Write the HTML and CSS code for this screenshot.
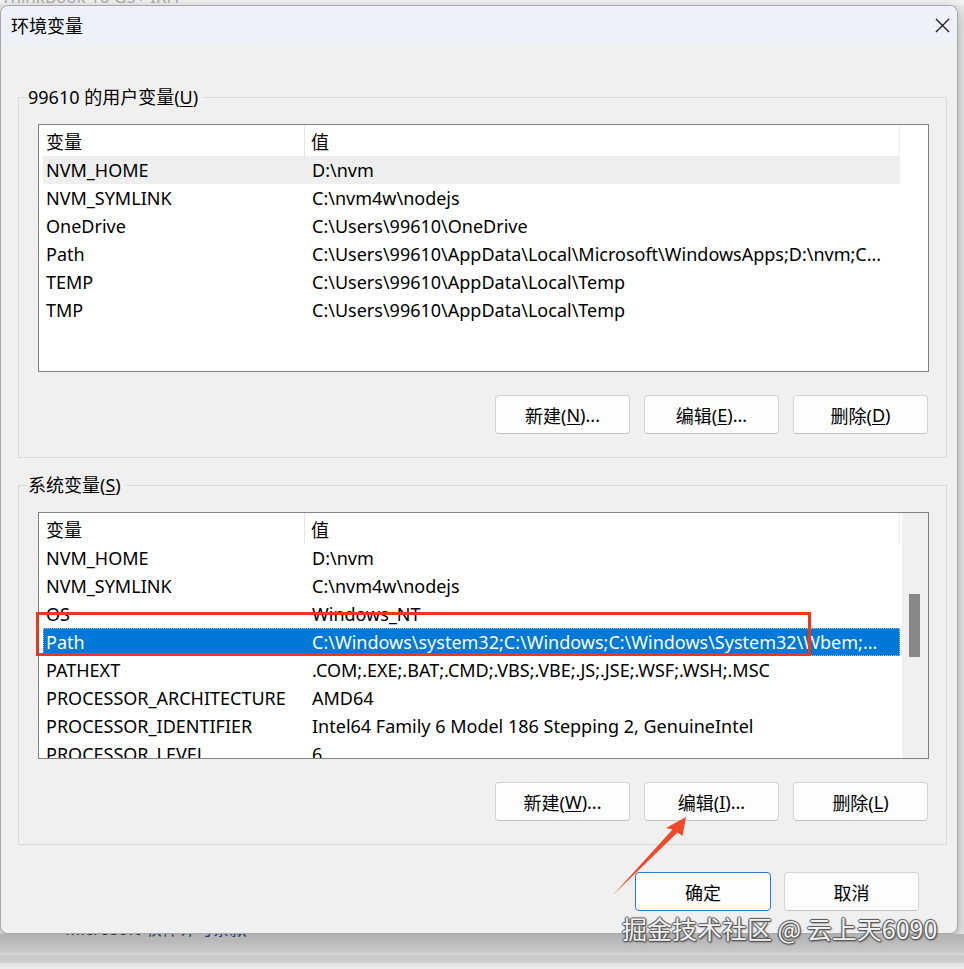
FILE: index.html
```html
<!DOCTYPE html>
<html lang="zh-CN">

<head>
    <meta charset="UTF-8">
    <title>环境变量</title>
    <link rel="stylesheet" href="styles.css">
</head>

<body>

    <div class="desk-top"><span>ThinkBook 16 G5+ IRH</span></div>

    <div class="dialog">
        <div class="titlebar">
            <span class="title">环境变量</span>
            <svg class="close" width="15" height="15" viewBox="0 0 15 15">
                <path d="M1 1 L14 14 M14 1 L1 14" stroke="#1a1a1a" stroke-width="1.3" fill="none" />
            </svg>
        </div>

        <fieldset class="group">
            <legend>99610 的用户变量(<u>U</u>)</legend>
            <div class="list">
                <div class="list-main">
                    <div class="head">
                        <div class="c1">变量</div>
                        <div class="c2">值</div>
                    </div>
                    <div class="row hot"><div class="c1">NVM_HOME</div><div class="c2">D:\nvm</div></div>
                    <div class="row"><div class="c1">NVM_SYMLINK</div><div class="c2">C:\nvm4w\nodejs</div></div>
                    <div class="row"><div class="c1">OneDrive</div><div class="c2">C:\Users\99610\OneDrive</div></div>
                    <div class="row"><div class="c1">Path</div><div class="c2">C:\Users\99610\AppData\Local\Microsoft\WindowsApps;D:\nvm;C...</div></div>
                    <div class="row"><div class="c1">TEMP</div><div class="c2">C:\Users\99610\AppData\Local\Temp</div></div>
                    <div class="row"><div class="c1">TMP</div><div class="c2">C:\Users\99610\AppData\Local\Temp</div></div>
                </div>
            </div>
            <div class="btns">
                <div class="btn">新建(<u>N</u>)...</div>
                <div class="btn">编辑(<u>E</u>)...</div>
                <div class="btn">删除(<u>D</u>)</div>
            </div>
        </fieldset>

        <fieldset class="group sys">
            <legend>系统变量(<u>S</u>)</legend>
            <div class="list short">
                <div class="list-main">
                    <div class="head">
                        <div class="c1">变量</div>
                        <div class="c2">值</div>
                    </div>
                    <div class="row"><div class="c1">NVM_HOME</div><div class="c2">D:\nvm</div></div>
                    <div class="row"><div class="c1">NVM_SYMLINK</div><div class="c2">C:\nvm4w\nodejs</div></div>
                    <div class="row"><div class="c1">OS</div><div class="c2">Windows_NT</div></div>
                    <div class="row sel"><div class="c1">Path</div><div class="c2">C:\Windows\system32;C:\Windows;C:\Windows\System32\Wbem;...</div></div>
                    <div class="row"><div class="c1">PATHEXT</div><div class="c2">.COM;.EXE;.BAT;.CMD;.VBS;.VBE;.JS;.JSE;.WSF;.WSH;.MSC</div></div>
                    <div class="row"><div class="c1">PROCESSOR_ARCHITECTURE</div><div class="c2">AMD64</div></div>
                    <div class="row"><div class="c1">PROCESSOR_IDENTIFIER</div><div class="c2">Intel64 Family 6 Model 186 Stepping 2, GenuineIntel</div></div>
                    <div class="row"><div class="c1">PROCESSOR_LEVEL</div><div class="c2">6</div></div>
                </div>
                <div class="scrollbar"><div class="thumb"></div></div>
            </div>
            <div class="btns">
                <div class="btn">新建(<u>W</u>)...</div>
                <div class="btn">编辑(<u>I</u>)...</div>
                <div class="btn">删除(<u>L</u>)</div>
            </div>
        </fieldset>

        <div class="dialog-btns">
            <div class="btn default">确定</div>
            <div class="btn">取消</div>
        </div>
    </div>

    <div class="desk-bottom"><span><b>Microsoft</b> 软件许可条款</span></div>

    <!-- annotations drawn over the screenshot -->
    <svg class="annot" width="964" height="969" viewBox="0 0 964 969">
        <rect x="37.5" y="613.5" width="772" height="41" fill="none" stroke="#e8391b" stroke-width="3" />
        <polygon points="686,817 682.5,836 677.5,832.5 613.5,894.5 672.5,829.5 666,828" fill="#f04a2a" />
    </svg>

    <div class="watermark">掘金技术社区 @ 云上天6090</div>

</body>

</html>
```

FILE: styles.css
```css
* {
    box-sizing: border-box;
}

body {
    margin: 0;
    width: 964px;
    height: 969px;
    overflow: hidden;
    position: relative;
    background: #e9e9e9;
    font-family: "Noto Sans", "Noto Sans CJK SC", sans-serif;
    font-size: 18px;
    color: #000;
}

u {
    text-underline-offset: 2px;
    text-decoration-thickness: 1px;
}

.desk-top {
    height: 5px;
    overflow: hidden;
    background: #f3f3f3;
    padding-left: 1px;
}

.desk-top span {
    display: block;
    margin-top: -13px;
    line-height: 20px;
    font-size: 17px;
    color: #a8a8a8;
}

.dialog {
    width: 958px;
    height: 929px;
    display: flex;
    flex-direction: column;
    background: #f0f0f0;
    border: 1px solid #a8a8a8;
    border-radius: 8px;
    box-shadow: 0 4px 14px rgba(0, 0, 0, 0.3);
}

.titlebar {
    height: 42px;
    flex-shrink: 0;
    display: flex;
    align-items: center;
    justify-content: space-between;
    padding: 0 7px 4px 10px;
    border-radius: 8px 8px 0 0;
    background: linear-gradient(#eef2f8 0, #eef2f8 34px, #f0f0f0 42px);
}

.title {
    font-size: 18px;
}

.group {
    width: 929px;
    margin: 37px 0 0 17px;
    padding: 15px 17px 23px 19px;
    border: 1px solid #dcdcdc;
    min-width: 0;
}

.group.sys {
    margin-top: 15px;
}

.group legend {
    margin-left: -10px;
    padding: 0 5px 0 0;
    line-height: 24px;
}

.list {
    height: 248px;
    display: flex;
    background: #fff;
    border: 1px solid #828282;
    overflow: hidden;
}

.list.short {
    height: 247px;
}

.list-main {
    width: 861px;
    flex-shrink: 0;
    overflow: hidden;
}

.head {
    height: 31px;
    display: flex;
    align-items: center;
    border-right: 1px solid #ececec;
}

.head .c1 {
    width: 266px;
    padding-left: 7px;
    align-self: stretch;
    display: flex;
    align-items: center;
    border-right: 1px solid #e5e5e5;
}

.head .c2 {
    padding-left: 6px;
}

.row {
    height: 28px;
    margin-left: 4px;
    display: flex;
    align-items: center;
    white-space: nowrap;
}

.row .c1 {
    width: 262px;
    flex-shrink: 0;
    padding-left: 3px;
}

.row .c2 {
    flex: 1;
    padding-left: 7px;
    overflow: hidden;
}

.row.hot {
    background: #efefef;
}

.row.sel {
    background: #0078d7;
    color: #fff;
    outline: 1px dotted #9cc8f0;
    outline-offset: -1px;
}

.scrollbar {
    width: 26px;
    margin-left: 2px;
    background: #f0f0f0;
    padding: 81px 0 0 7px;
}

.thumb {
    width: 11px;
    height: 63px;
    background: #888;
}

.btns {
    display: flex;
    justify-content: flex-end;
    gap: 14px;
    margin: 23px 1px 0 0;
}

.btn {
    width: 135px;
    height: 39px;
    display: flex;
    align-items: center;
    justify-content: center;
    background: #fdfdfd;
    border: 1px solid #d3d3d3;
    border-bottom-color: #c2c2c2;
    border-radius: 4px;
    font-size: 18px;
}

.dialog-btns {
    display: flex;
    justify-content: flex-end;
    gap: 13px;
    margin: 27px 38px 0 0;
}

.btn.default {
    width: 136px;
    border-color: #2a7cd0;
}

.desk-bottom {
    height: 35px;
    overflow: hidden;
    padding-left: 65px;
    background: linear-gradient(#b2b2b2 0, #c2c2c2 14px, #c9c9c9 18px, #d8d8d8 20px, #c8c8c8 22px, #cecece 28px, #e4e4e4 30px, #ececec 35px);
}

.desk-bottom span {
    display: block;
    margin-top: -15px;
    line-height: 20px;
    font-size: 17px;
    color: #1f3b73;
}

.desk-bottom b {
    font-weight: normal;
    color: #333;
}

.annot {
    position: absolute;
    left: 0;
    top: 0;
    pointer-events: none;
}

.watermark {
    position: absolute;
    left: 622px;
    top: 911px;
    font-family: "Noto Sans CJK SC", sans-serif;
    font-size: 25px;
    line-height: 34px;
    color: #f2f2f2;
    white-space: nowrap;
    text-shadow: 1px 0 1px #555, -1px 0 1px #555, 0 1px 1px #555, 0 -1px 1px #555, 1px 1px 2px #444;
}
```
